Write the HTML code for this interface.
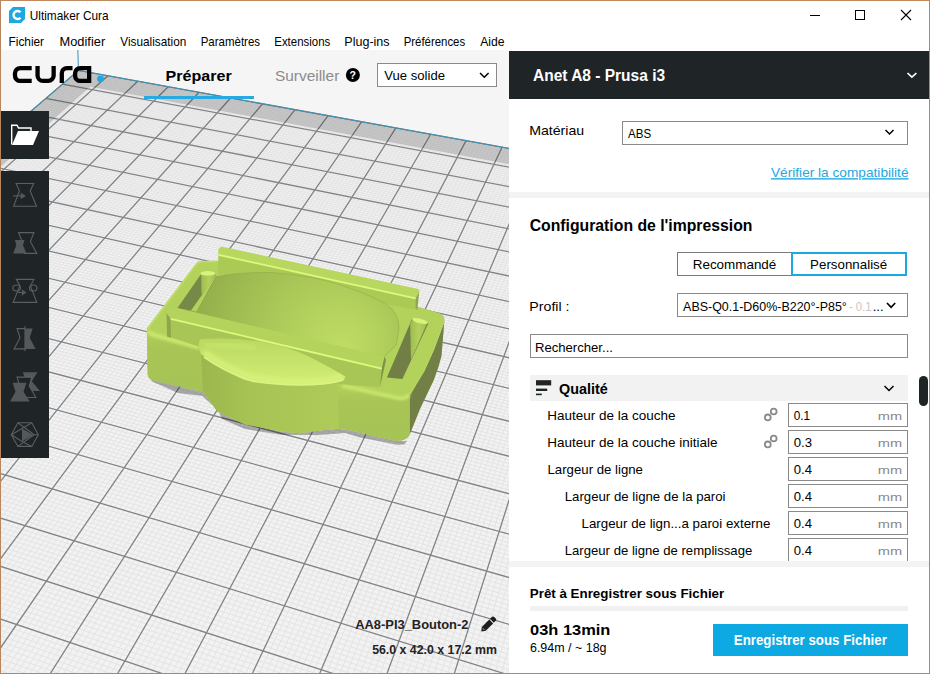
<!DOCTYPE html>
<html><head><meta charset="utf-8">
<style>
*{margin:0;padding:0;box-sizing:border-box}
html,body{width:930px;height:674px;overflow:hidden;background:#fff;font-family:"Liberation Sans",sans-serif}
.a{position:absolute}
#vp{position:absolute;left:1px;top:50px;width:508px;height:623px;background:#f5f5f5;overflow:hidden}
#vp svg{position:absolute;left:-1px;top:-50px}
.dk{background:#1f2427}
.box{position:absolute;background:#fff;border:1px solid #8a8a8a}
#txt{position:absolute;left:0;top:0;font-family:"Liberation Sans",sans-serif}
</style></head><body>
<div id="vp">
<svg width="930" height="674" viewBox="0 0 930 674">
<polygon points="78.35,70.43 857.26,211.49 859.36,1145.03 -538.22,600.49" fill="#f2f2f2"/>
<path d="M81.28 70.96L-533.85 602.19M76.79 71.78L857.27 213.47M84.21 71.49L-529.46 603.9M75.22 73.13L857.27 215.45M87.15 72.02L-525.06 605.62M73.64 74.49L857.28 217.45M90.09 72.56L-520.65 607.34M72.05 75.85L857.28 219.45M93.03 73.09L-516.22 609.06M70.46 77.22L857.28 221.46M95.98 73.62L-511.78 610.79M68.86 78.59L857.29 223.49M98.94 74.16L-507.33 612.52M67.26 79.97L857.29 225.52M101.89 74.69L-502.87 614.26M65.65 81.35L857.3 227.57M104.86 75.23L-498.39 616.01M64.03 82.75L857.3 229.62M110.8 76.31L-489.4 619.51M60.77 85.54L857.31 233.76M113.78 76.85L-484.89 621.27M59.14 86.95L857.32 235.85M116.76 77.39L-480.36 623.03M57.49 88.37L857.32 237.94M119.75 77.93L-475.82 624.8M55.84 89.78L857.33 240.05M122.74 78.47L-471.27 626.58M54.18 91.21L857.33 242.17M125.74 79.01L-466.7 628.36M52.52 92.64L857.34 244.29M128.74 79.56L-462.12 630.14M50.85 94.08L857.34 246.43M131.75 80.1L-457.52 631.93M49.17 95.52L857.35 248.58M134.76 80.65L-452.92 633.73M47.48 96.97L857.35 250.74M140.79 81.74L-443.66 637.33M44.09 99.89L857.36 255.1M143.82 82.29L-439.01 639.14M42.38 101.36L857.37 257.29M146.85 82.84L-434.35 640.96M40.67 102.83L857.37 259.49M149.89 83.39L-429.68 642.78M38.95 104.31L857.37 261.71M152.93 83.94L-424.99 644.61M37.22 105.8L857.38 263.94M155.97 84.49L-420.28 646.44M35.48 107.29L857.38 266.18M159.02 85.04L-415.57 648.28M33.74 108.79L857.39 268.43M162.08 85.59L-410.84 650.12M31.99 110.29L857.4 270.69M165.14 86.15L-406.09 651.97M30.23 111.8L857.4 272.97M171.28 87.26L-396.56 655.68M26.69 114.85L857.41 277.55M174.35 87.82L-391.77 657.55M24.91 116.38L857.42 279.87M177.43 88.37L-386.97 659.42M23.12 117.92L857.42 282.19M180.52 88.93L-382.16 661.3M21.32 119.46L857.43 284.52M183.61 89.49L-377.33 663.18M19.52 121.01L857.43 286.87M186.7 90.05L-372.48 665.07M17.71 122.57L857.44 289.23M189.8 90.62L-367.62 666.96M15.89 124.13L857.44 291.61M192.91 91.18L-362.75 668.86M14.06 125.71L857.45 293.99M196.02 91.74L-357.86 670.76M12.22 127.28L857.45 296.39M202.26 92.87L-348.04 674.59M8.53 130.46L857.46 301.23M205.38 93.44L-343.11 676.51M6.66 132.06L857.47 303.67M208.51 94L-338.16 678.44M4.8 133.67L857.47 306.12M211.65 94.57L-333.2 680.37M2.92 135.28L857.48 308.58M214.79 95.14L-328.22 682.31M1.03 136.9L857.49 311.06M217.94 95.71L-323.23 684.26M-0.86 138.53L857.49 313.55M221.09 96.28L-318.22 686.21M-2.76 140.16L857.5 316.06M224.25 96.85L-313.19 688.17M-4.67 141.81L857.5 318.58M227.41 97.43L-308.16 690.13M-6.59 143.46L857.51 321.11M233.75 98.57L-298.03 694.07M-10.45 146.78L857.52 326.22M236.93 99.15L-292.95 696.05M-12.4 148.45L857.53 328.79M240.11 99.73L-287.85 698.04M-14.35 150.13L857.53 331.38M243.3 100.3L-282.73 700.03M-16.31 151.81L857.54 333.99M246.49 100.88L-277.6 702.03M-18.28 153.51L857.54 336.61M249.69 101.46L-272.45 704.04M-20.26 155.21L857.55 339.24M252.89 102.04L-267.29 706.05M-22.25 156.92L857.55 341.89M256.1 102.62L-262.11 708.07M-24.25 158.64L857.56 344.56M259.32 103.2L-256.91 710.09M-26.26 160.36L857.57 347.23M265.76 104.37L-246.47 714.16M-30.3 163.84L857.58 352.64M268.99 104.96L-241.23 716.21M-32.33 165.59L857.59 355.36M272.23 105.54L-235.97 718.26M-34.38 167.35L857.59 358.11M275.47 106.13L-230.69 720.31M-36.43 169.11L857.6 360.86M278.72 106.72L-225.4 722.37M-38.5 170.88L857.6 363.63M281.97 107.31L-220.09 724.44M-40.57 172.67L857.61 366.42M285.23 107.9L-214.76 726.52M-42.65 174.46L857.62 369.23M288.49 108.49L-209.41 728.6M-44.74 176.26L857.62 372.05M291.76 109.08L-204.05 730.69M-46.85 178.06L857.63 374.89M298.32 110.27L-193.28 734.89M-51.08 181.7L857.64 380.61M301.6 110.86L-187.87 736.99M-53.21 183.53L857.65 383.5M304.89 111.46L-182.44 739.11M-55.35 185.38L857.65 386.41M308.19 112.05L-177 741.23M-57.5 187.23L857.66 389.33M311.49 112.65L-171.53 743.36M-59.67 189.08L857.67 392.27M314.8 113.25L-166.05 745.5M-61.84 190.95L857.67 395.23M318.11 113.85L-160.56 747.64M-64.02 192.83L857.68 398.2M321.43 114.45L-155.04 749.79M-66.21 194.71L857.69 401.2M324.75 115.05L-149.51 751.94M-68.42 196.61L857.69 404.21M331.42 116.26L-138.39 756.28M-72.86 200.42L857.71 410.29M334.76 116.87L-132.8 758.45M-75.09 202.34L857.72 413.35M338.11 117.47L-127.2 760.64M-77.34 204.28L857.72 416.44M341.46 118.08L-121.57 762.83M-79.59 206.22L857.73 419.54M344.82 118.69L-115.93 765.02M-81.86 208.17L857.74 422.67M348.18 119.3L-110.27 767.23M-84.14 210.13L857.74 425.81M351.55 119.91L-104.6 769.44M-86.43 212.09L857.75 428.97M354.93 120.52L-98.9 771.66M-88.73 214.07L857.76 432.15M358.31 121.13L-93.19 773.89M-91.05 216.06L857.76 435.35M365.09 122.36L-81.7 778.36M-95.71 220.07L857.78 441.82M368.48 122.97L-75.93 780.61M-98.05 222.08L857.79 445.08M371.89 123.59L-70.14 782.87M-100.41 224.11L857.79 448.36M375.3 124.21L-64.33 785.13M-102.78 226.15L857.8 451.66M378.71 124.83L-58.51 787.4M-105.16 228.2L857.81 454.99M382.14 125.45L-52.66 789.68M-107.56 230.25L857.82 458.33M385.56 126.07L-46.8 791.96M-109.96 232.32L857.82 461.7M389 126.69L-40.91 794.26M-112.38 234.4L857.83 465.09M392.44 127.31L-35.01 796.56M-114.81 236.49L857.84 468.49M399.33 128.56L-23.14 801.18M-119.71 240.7L857.85 475.38M402.79 129.19L-17.18 803.5M-122.17 242.82L857.86 478.86M406.25 129.81L-11.19 805.83M-124.65 244.95L857.87 482.35M409.72 130.44L-5.19 808.17M-127.15 247.1L857.88 485.88M413.2 131.07L0.83 810.52M-129.65 249.25L857.89 489.42M416.68 131.7L6.88 812.87M-132.17 251.41L857.89 492.99M420.17 132.33L12.94 815.24M-134.7 253.59L857.9 496.58M423.66 132.97L19.02 817.61M-137.24 255.78L857.91 500.2M427.16 133.6L25.13 819.99M-139.8 257.97L857.92 503.83M434.17 134.87L37.4 824.77M-144.95 262.4L857.93 511.19M437.69 135.51L43.57 827.17M-147.55 264.64L857.94 514.9M441.22 136.15L49.75 829.58M-150.16 266.88L857.95 518.63M444.75 136.79L55.96 832M-152.78 269.13L857.96 522.4M448.28 137.43L62.19 834.43M-155.42 271.4L857.97 526.19M451.82 138.07L68.44 836.86M-158.07 273.68L857.98 530M455.37 138.71L74.71 839.3M-160.74 275.97L857.99 533.84M458.93 139.35L81 841.76M-163.42 278.28L857.99 537.7M462.49 140L87.32 844.22M-166.11 280.59L858 541.6M469.63 141.29L100.01 849.16M-171.54 285.26L858.02 549.46M473.21 141.94L106.39 851.65M-174.28 287.61L858.03 553.44M476.79 142.59L112.79 854.14M-177.03 289.98L858.04 557.44M480.38 143.24L119.22 856.65M-179.79 292.35L858.05 561.47M483.98 143.89L125.66 859.16M-182.57 294.75L858.06 565.52M487.59 144.54L132.13 861.68M-185.37 297.15L858.07 569.61M491.2 145.2L138.62 864.21M-188.18 299.57L858.07 573.72M494.81 145.85L145.13 866.74M-191.01 302L858.08 577.87M498.44 146.51L151.67 869.29M-193.85 304.44L858.09 582.04M505.7 147.82L164.81 874.41M-199.58 309.36L858.11 590.48M509.35 148.48L171.41 876.98M-202.47 311.85L858.12 594.74M513 149.15L178.04 879.57M-205.37 314.34L858.13 599.03M516.65 149.81L184.69 882.16M-208.29 316.85L858.14 603.36M520.31 150.47L191.36 884.76M-211.23 319.38L858.15 607.72M523.98 151.14L198.06 887.37M-214.18 321.92L858.16 612.1M527.66 151.8L204.78 889.98M-217.15 324.47L858.17 616.52M531.34 152.47L211.53 892.61M-220.13 327.03L858.18 620.98M535.03 153.14L218.3 895.25M-223.14 329.62L858.19 625.46M542.42 154.48L231.91 900.55M-229.19 334.82L858.21 634.53M546.13 155.15L238.75 903.22M-232.24 337.45L858.22 639.12M549.85 155.82L245.61 905.89M-235.31 340.08L858.23 643.74M553.57 156.49L252.5 908.58M-238.4 342.74L858.24 648.39M557.3 157.17L259.42 911.27M-241.51 345.41L858.25 653.08M561.03 157.84L266.36 913.98M-244.63 348.09L858.26 657.81M564.77 158.52L273.32 916.69M-247.77 350.79L858.27 662.57M568.52 159.2L280.31 919.41M-250.93 353.51L858.28 667.37M572.28 159.88L287.32 922.14M-254.11 356.24L858.3 672.2M579.81 161.24L301.43 927.64M-260.51 361.75L858.32 681.98M583.58 161.93L308.52 930.4M-263.75 364.53L858.33 686.93M587.36 162.61L315.63 933.18M-267 367.32L858.34 691.91M591.15 163.3L322.78 935.96M-270.27 370.13L858.35 696.94M594.95 163.99L329.94 938.75M-273.56 372.96L858.36 702M598.75 164.68L337.14 941.55M-276.86 375.8L858.37 707.1M602.56 165.37L344.36 944.37M-280.19 378.67L858.39 712.25M606.37 166.06L351.61 947.19M-283.54 381.54L858.4 717.43M610.2 166.75L358.88 950.03M-286.91 384.44L858.41 722.66M617.86 168.14L373.51 955.72M-293.7 390.28L858.43 733.23M621.71 168.83L380.86 958.59M-297.13 393.22L858.44 738.58M625.56 169.53L388.24 961.47M-300.58 396.19L858.46 743.98M629.42 170.23L395.65 964.35M-304.04 399.17L858.47 749.42M633.28 170.93L403.09 967.25M-307.53 402.17L858.48 754.9M637.15 171.63L410.55 970.16M-311.04 405.19L858.49 760.43M641.03 172.33L418.04 973.08M-314.58 408.22L858.51 766M644.92 173.04L425.56 976.01M-318.13 411.28L858.52 771.62M648.81 173.74L433.11 978.95M-321.7 414.35L858.53 777.29M656.62 175.16L448.29 984.86M-328.92 420.56L858.56 788.76M660.53 175.86L455.92 987.84M-332.56 423.69L858.57 794.57M664.46 176.58L463.58 990.82M-336.22 426.84L858.58 800.42M668.39 177.29L471.27 993.82M-339.91 430L858.6 806.33M672.32 178L478.99 996.83M-343.62 433.19L858.61 812.29M676.27 178.71L486.74 999.85M-347.35 436.4L858.62 818.3M680.22 179.43L494.52 1002.88M-351.11 439.63L858.64 824.36M684.17 180.15L502.33 1005.92M-354.89 442.88L858.65 830.47M688.14 180.86L510.17 1008.97M-358.69 446.15L858.66 836.63M696.09 182.3L525.93 1015.11M-366.37 452.75L858.69 849.12M700.08 183.03L533.86 1018.2M-370.24 456.08L858.71 855.45M704.07 183.75L541.82 1021.3M-374.14 459.43L858.72 861.83M708.08 184.47L549.8 1024.42M-378.07 462.81L858.74 868.27M712.09 185.2L557.82 1027.54M-382.02 466.2L858.75 874.76M716.1 185.93L565.87 1030.68M-385.99 469.62L858.76 881.32M720.13 186.66L573.96 1033.83M-389.99 473.06L858.78 887.93M724.16 187.39L582.07 1036.99M-394.02 476.52L858.79 894.6M728.2 188.12L590.21 1040.16M-398.07 480.01L858.81 901.33M736.3 189.59L606.6 1046.54M-406.26 487.04L858.84 914.98M740.36 190.32L614.83 1049.75M-410.39 490.6L858.86 921.89M744.43 191.06L623.11 1052.98M-414.55 494.17L858.87 928.88M748.51 191.8L631.41 1056.21M-418.74 497.77L858.89 935.92M752.59 192.54L639.75 1059.46M-422.96 501.4L858.9 943.03M756.69 193.28L648.12 1062.72M-427.2 505.04L858.92 950.21M760.79 194.02L656.52 1066M-431.47 508.72L858.94 957.45M764.89 194.76L664.96 1069.28M-435.77 512.41L858.95 964.76M769.01 195.51L673.43 1072.58M-440.1 516.14L858.97 972.14M777.27 197L690.46 1079.22M-448.85 523.65L859 987.12M781.4 197.75L699.04 1082.56M-453.26 527.45L859.02 994.71M785.55 198.51L707.64 1085.91M-457.71 531.27L859.04 1002.38M789.71 199.26L716.28 1089.28M-462.19 535.12L859.05 1010.12M793.87 200.01L724.95 1092.66M-466.7 539L859.07 1017.94M798.04 200.77L733.66 1096.05M-471.24 542.9L859.09 1025.83M802.22 201.52L742.4 1099.46M-475.81 546.83L859.11 1033.8M806.4 202.28L751.18 1102.88M-480.41 550.79L859.12 1041.85M810.6 203.04L760 1106.31M-485.04 554.77L859.14 1049.98M819.01 204.56L777.73 1113.22M-494.41 562.82L859.18 1066.48M823.23 205.33L786.66 1116.7M-499.14 566.89L859.2 1074.86M827.45 206.09L795.61 1120.19M-503.9 570.99L859.22 1083.32M831.69 206.86L804.61 1123.69M-508.7 575.11L859.24 1091.86M835.93 207.63L813.64 1127.21M-513.53 579.27L859.26 1100.5M840.18 208.4L822.71 1130.75M-518.4 583.45L859.28 1109.22M844.44 209.17L831.81 1134.29M-523.3 587.66L859.3 1118.03M848.7 209.94L840.96 1137.86M-528.24 591.91L859.32 1126.94M852.98 210.72L850.14 1141.43M-533.21 596.18L859.34 1135.93" stroke="#e4e4e5" stroke-width="1" fill="none"/>
<path d="M78.35 70.43L-538.22 600.49M78.35 70.43L857.26 211.49M107.83 75.77L-493.91 617.75M62.41 84.14L857.31 231.69M137.77 81.19L-448.3 635.53M45.79 98.43L857.36 252.91M168.21 86.7L-401.33 653.82M28.46 113.32L857.41 275.26M199.14 92.31L-352.96 672.67M10.38 128.87L857.46 298.8M230.58 98L-303.1 692.1M-8.52 145.11L857.51 323.66M262.54 103.79L-251.7 712.13M-28.27 162.1L857.57 349.93M295.04 109.67L-198.68 732.78M-48.96 179.88L857.64 377.74M328.08 115.66L-143.96 754.11M-70.63 198.51L857.7 407.24M361.69 121.74L-87.45 776.12M-93.37 218.06L857.77 438.57M395.88 127.94L-29.08 798.86M-117.25 238.59L857.85 471.93M430.66 134.24L31.25 822.37M-142.37 260.18L857.93 507.5M466.05 140.64L93.65 846.69M-168.82 282.92L858.01 545.52M502.07 147.17L158.23 871.85M-196.71 306.89L858.1 586.24M538.72 153.8L225.09 897.9M-226.15 332.21L858.2 629.98M576.04 160.56L294.36 924.89M-257.3 358.99L858.31 677.07M614.03 167.44L366.18 952.87M-290.29 387.35L858.42 727.92M652.71 174.45L440.69 981.9M-325.3 417.44L858.54 783M692.11 181.58L518.03 1012.04M-362.52 449.44L858.68 842.85M732.25 188.85L598.39 1043.35M-402.15 483.51L858.82 908.12M773.13 196.26L681.93 1075.9M-444.46 519.88L858.99 979.59M814.8 203.8L768.85 1109.76M-489.71 558.78L859.16 1058.19M857.26 211.49L859.36 1145.03M-538.22 600.49L859.36 1145.03" stroke="#818386" stroke-width="1.3" fill="none"/>
<path d="M78.35,70.43 857.26,211.49 859.36,1145.03 -538.22,600.49Z M90.21,86.74 -459.82,578.63 785.26,1043.08 820.4,221.77Z" fill="rgba(0,0,0,0.16)" fill-rule="evenodd"/>
<path d="M-8.52 145.11L78.35 70.43L857.26 211.49M78.35 70.43L76.75 0" stroke="#3b93b8" stroke-width="1" fill="none"/>
<defs>
<linearGradient id="cyl" x1="0" y1="0" x2="1" y2="0">
<stop offset="0" stop-color="#9cb74e"/><stop offset="0.35" stop-color="#a6c354"/><stop offset="1" stop-color="#afcc59"/>
</linearGradient>
<radialGradient id="dome" gradientUnits="userSpaceOnUse" cx="320" cy="330" r="150" fx="345" fy="350">
<stop offset="0" stop-color="#c0de65"/><stop offset="0.35" stop-color="#afcd5a"/><stop offset="0.7" stop-color="#9cb950"/><stop offset="1" stop-color="#8aa447"/>
</radialGradient>
<linearGradient id="lip" x1="0" y1="0" x2="0" y2="1">
<stop offset="0" stop-color="#bad95f"/><stop offset="0.5" stop-color="#c6e46b"/><stop offset="1" stop-color="#d3ee74"/>
</linearGradient>
<linearGradient id="ffr" x1="0" y1="0" x2="0" y2="1">
<stop offset="0" stop-color="#b4d25c"/><stop offset="0.3" stop-color="#a8c556"/><stop offset="1" stop-color="#a6c355"/>
</linearGradient>
<linearGradient id="post" x1="0" y1="0" x2="1" y2="0">
<stop offset="0" stop-color="#9fbb52"/><stop offset="0.5" stop-color="#b3d15c"/><stop offset="1" stop-color="#a2bf53"/>
</linearGradient>
<filter id="blur1" x="-20%" y="-50%" width="140%" height="200%"><feGaussianBlur stdDeviation="1"/></filter>
<filter id="blur2" x="-20%" y="-50%" width="140%" height="200%"><feGaussianBlur stdDeviation="2"/></filter>
<clipPath id="lipclip"><path d="M200 339.2Q230 337 263.1 341.9Q290 347 308.8 356.6Q333 369 345.4 376.7Q344 381 341.7 381.5Q330 384 318 384.5Q281.4 387 244.8 380Q217.4 368 201 354Q197 346 200 339.2Z"/></clipPath>
</defs>
<!-- shadow -->
<path d="M150 379L200.2 391.2L202.8 391.3L217.4 411.4L244.8 424.2L281.4 431.5L300 433.2L319.4 430.6L338.7 428.7L351.6 430.6L377.4 437.1L396.8 441L407 441L404 444.5L397 444.8L377 440.8L360 437.5L345 433L318 435L281 434.8L245 429L222 419L218.3 410.5L202.3 396L178.3 393L153 382Z" fill="rgba(0,0,0,0.3)"/>
<!-- frame silhouette base -->
<path d="M200.6 261.3L216.6 260.9L418.3 307.1L438.5 313.1Q444.4 315 444.4 319L443.8 327.3L441.5 355.8L438.5 366.5L433.8 380L420 408.7L409.7 434.5Q407 441 396.8 441L377.4 437.1L351.6 430.6L338.7 428.7L319.4 430.6L300 433.2L281.4 431.5L244.8 424.2L217.4 411.4L202.8 391.3L200.2 391.2L152 380Q147.7 378 147.7 374L146.9 328.4L195.3 265.3Q197.5 261.5 200.6 261.3Z" fill="#a9c755"/>
<!-- frame top -->
<path d="M200.6 261.3L216.6 260.9L418.3 307.1L438.5 313.1Q444.4 315 444.4 321L433.8 349.9L424.3 371.3L410.7 394.5Q406 398.5 400.6 397.7L341.3 384.2L198.5 346.5L155 334Q147 331 146.9 328.4L195.3 265.3Q197.5 261.5 200.6 261.3Z" fill="#b3d25c"/>
<!-- right face -->
<path d="M444.4 321L443.8 327.3L441.5 355.8L438.5 366.5L433.8 380L420 408.7L409.7 434.5L409.7 396L410.7 394.5L424.3 371.3L433.8 349.9Z" fill="#728047"/>
<!-- front faces -->
<path d="M341.3 384.2L400.6 397.7Q406 398.5 409.7 394.5L409.7 434.5Q407 441 396.8 441L377.4 437.1L351.6 430.6L338.7 428.7L337.4 384Z" fill="url(#ffr)"/>
<path d="M146.9 328.4Q147 331 155 334L198.5 346.5L202.8 391.3L200.2 391.2L152 380Q147.7 378 147.7 374Z" fill="url(#ffr)"/>
<!-- rounded edge highlights -->
<path d="M148 331Q150 334 156 335.5L199 347.5" stroke="#c9e56b" stroke-width="4.5" fill="none" filter="url(#blur1)"/>
<path d="M342 385.5L400 398.5Q405.5 399 409 394.5" stroke="#c8e56b" stroke-width="4" fill="none" filter="url(#blur1)"/>
<path d="M409 394.5L424 371L433.5 350L444 322" stroke="#b9d862" stroke-width="1" fill="none"/>
<path d="M147.5 329L195.5 265.5Q197.5 262 201 261.8L216.6 261.3" stroke="#bfdd64" stroke-width="1.8" fill="none"/>
<!-- left slot -->
<path d="M200.6 274.7L216.2 274.7L190.8 310.8L177.5 308.1Z" fill="#778946"/>
<path d="M201.2 274.7L216.2 274.7L203 294L201.5 294Z" fill="url(#post)"/>
<ellipse cx="207.8" cy="273.3" rx="7.4" ry="2.3" fill="#d8f27a"/>
<path d="M216.6 276L197 311.6" stroke="#7f9248" stroke-width="0.9"/>
<!-- right slot -->
<path d="M412 318.9L428.4 323.3L402.4 378.9L386.9 377.4Z" fill="#717f46"/>
<path d="M412.2 320L427 323.5L411 360L410.2 324Z" fill="url(#post)"/>
<ellipse cx="420" cy="321" rx="8" ry="2.4" transform="rotate(14 420 321)" fill="#d8f27a"/>
<!-- back rail -->
<path d="M218.3 254.6L415.6 298.2L417.3 310L218 274Z" fill="#abca55"/>
<path d="M220.9 246.5L417.3 288.7Q419.8 289.5 419.3 291.5L415.6 298.2L218.3 254.6L218.5 249Z" fill="#b8d75f"/>
<path d="M419.3 291.5L417.3 310.2L415.6 308L415.6 298.2Z" fill="#8ea74b"/>
<path d="M218.5 254.8L415.6 298.4" stroke="#def87e" stroke-width="1.8"/>
<!-- dome -->
<path d="M216.6 276.5Q240 272 271 272.5Q312 275 342 285.5Q380 298 392 309Q400 318 398.8 330L396.4 344.6L384.5 356.7L176.9 308.2L197 311.6Z" fill="url(#dome)"/>
<path d="M216.6 276.5Q240 272 271 272.5Q312 275 342 285.5Q380 298 392 309Q400 318 398.8 330L396.4 344.6L384.5 356.7" stroke="#8fa84a" stroke-width="1" fill="none" opacity="0.55"/>
<!-- front rail -->
<path d="M168 310.5L176.9 308.2L384.5 356.7L381.8 368.3L170.7 318.5Z" fill="#b4d35c"/>
<path d="M170.7 318.5L381.8 368.3L380 387L341.3 384.2L198.5 346.5L171 337.2Z" fill="#a8c655"/>
<path d="M384.5 356.7L386 360L380 387L381.8 368.3Z" fill="#7f9148"/>
<path d="M166.5 313L170.7 318.5L171 338L167 336.5Z" fill="#8fa64d"/>
<path d="M165 311L176.9 308.2L170.7 318.5" fill="#b4d35c"/>
<path d="M170.7 318.8L381.8 368.6" stroke="#def87e" stroke-width="1.8"/>
<!-- bulge cylinder -->
<path d="M201 352.9Q217.4 365.7 244.8 378.5Q281.4 386 318 383Q335 382 341.7 380.3L337.4 384L338.7 428.7L319.4 430.6L300 433.2L281.4 431.5L244.8 424.2L217.4 411.4L202.8 391.3Z" fill="url(#cyl)"/>
<!-- bulge lip -->
<path d="M200 339.2Q230 337 263.1 341.9Q290 347 308.8 356.6Q333 369 345.4 376.7Q344 381 341.7 381.5Q330 384 318 384.5Q281.4 387 244.8 380Q217.4 368 201 354Q197 346 200 339.2Z" fill="url(#lip)"/>
<g clip-path="url(#lipclip)">
<path d="M204 352Q225 368 252 377Q290 384 325 380Q338 378 343 375" stroke="#d8f27c" stroke-width="5" fill="none" filter="url(#blur2)"/>
<path d="M205 345Q230 344 255 348" stroke="#c8e670" stroke-width="6" fill="none" filter="url(#blur2)" opacity="0.7"/>
</g>
<path d="M204 357Q225 372 252 381Q290 387 325 383.5Q338 382 343 379" stroke="#dbf382" stroke-width="1.8" fill="none"/>

</svg>
<div class="a" style="left:143px;top:46px;width:110px;height:3px;background:#29a9e1"></div>
<div class="a dk" style="left:0;top:61px;width:48px;height:48px"></div>
<div class="a dk" style="left:0;top:121px;width:48px;height:287px"></div>
</div>
<!-- right panel -->
<div class="a dk" style="left:509px;top:51px;width:420px;height:48px"></div>
<div class="a" style="left:509px;top:192px;width:420px;height:6px;background:#f3f3f3"></div>
<div class="a" style="left:509px;top:561px;width:420px;height:6px;background:#f3f3f3"></div>
<div class="box" style="left:377px;top:63px;width:120px;height:24px"></div>
<div class="box" style="left:622px;top:121px;width:286px;height:24px"></div>
<div class="box" style="left:677px;top:252px;width:115px;height:24px;border-color:#7a7a7a"></div>
<div class="box" style="left:791px;top:252px;width:116px;height:24px;border:2px solid #1ea8e0"></div>
<div class="box" style="left:677px;top:293px;width:231px;height:24px"></div>
<div class="box" style="left:530px;top:334px;width:378px;height:24px"></div>
<div class="a" style="left:530px;top:375px;width:378px;height:26px;background:#f2f2f2"></div>
<div class="a" style="left:919px;top:376px;width:9px;height:30px;border-radius:4.5px;background:#1f2427"></div>
<div class="box" style="left:788px;top:403px;width:120px;height:24px"></div>
<div class="box" style="left:788px;top:430px;width:120px;height:24px"></div>
<div class="box" style="left:788px;top:457px;width:120px;height:24px"></div>
<div class="box" style="left:788px;top:484px;width:120px;height:24px"></div>
<div class="box" style="left:788px;top:511px;width:120px;height:24px"></div>
<div class="a" style="left:788px;top:538px;width:120px;height:23px;border:1px solid #8a8a8a;border-bottom:none;background:#fff"></div>
<div class="a" style="left:530px;top:606px;width:378px;height:5px;background:#f1f1f1"></div>
<div class="a" style="left:713px;top:624px;width:195px;height:32px;background:#0ca9e3"></div>
<!-- window border -->
<div class="a" style="left:0;top:0;width:930px;height:1px;background:#c08a60"></div>
<div class="a" style="left:0;top:673px;width:930px;height:1px;background:#b8865e"></div>
<div class="a" style="left:0;top:0;width:1px;height:674px;background:#b8865e"></div>
<div class="a" style="left:929px;top:0;width:1px;height:674px;background:#b8865e"></div>
<svg id="txt" width="930" height="674" viewBox="0 0 930 674">
<!-- app icon -->
<path d="M13 7H25V19L21 23H9V11Z" fill="#1ea8e0"/>
<path d="M20.5 12.3A4 4 0 1 0 20.5 17.7" stroke="#fff" stroke-width="2.4" fill="none"/>
<!-- window controls -->
<path d="M810 15.5H820" stroke="#000" stroke-width="1"/>
<rect x="855.5" y="10.5" width="9" height="9" stroke="#000" stroke-width="1" fill="none"/>
<path d="M901 10L911 20M911 10L901 20" stroke="#000" stroke-width="1.1"/>
<!-- cura logo -->
<g stroke="#000" stroke-width="4.3" fill="none">
<path d="M31.7 68.05H20.3A5.3 5.3 0 0 0 15 73.35V75.65A5.3 5.3 0 0 0 20.3 80.95H31.7"/>
<path d="M37.55 65.9V75.45A5.5 5.5 0 0 0 43.05 80.95H48.15A5.5 5.5 0 0 0 53.65 75.45V65.9"/>
<path d="M61.8 83.1V73.35A5.3 5.3 0 0 1 67.1 68.05H72.5"/>
<path d="M89.15 83.1V68.05H80.4A5.3 5.3 0 0 0 75.1 73.35V75.65A5.3 5.3 0 0 0 80.4 80.95H89.15"/>
</g>
<circle cx="100.5" cy="78.8" r="3.4" fill="#1ea8e0"/>
<!-- help icon -->
<circle cx="352.9" cy="75" r="7" fill="#000"/>
<text x="349.6" y="79.3" font-size="10.5" font-weight="bold" fill="#fff">?</text>
<!-- chevrons -->
<path d="M480 73L484.3 77.3L488.6 73" stroke="#000" stroke-width="1.5" fill="none"/>
<path d="M885.5 130L889.5 134L893.5 130" stroke="#000" stroke-width="1.5" fill="none"/>
<path d="M887 303L891.1 307.3L895.2 303" stroke="#000" stroke-width="1.7" fill="none"/>
<path d="M884.5 386L889 390.5L893.5 386" stroke="#000" stroke-width="1.5" fill="none"/>
<path d="M907.5 73L911.9 77.2L916.4 73" stroke="#fff" stroke-width="1.7" fill="none"/>
<!-- quality icon -->
<rect x="536" y="380.2" width="15.2" height="5.2" fill="#1f2427"/>
<rect x="536" y="388.6" width="11.2" height="2.4" fill="#1f2427"/>
<rect x="536" y="393.6" width="5.8" height="1.6" fill="#1f2427"/>
<!-- link icons -->
<g stroke="#8a8a8a" stroke-width="1.8" fill="none">
<circle cx="767.8" cy="417.4" r="2.9"/><circle cx="773.7" cy="411.5" r="2.9"/>
<circle cx="767.8" cy="444.4" r="2.9"/><circle cx="773.7" cy="438.5" r="2.9"/>
</g>
<!-- toolbar icons -->
<g stroke="#5b5f62" stroke-width="1.1" fill="none" stroke-linejoin="miter">
<path d="M16.1 183.5H33.7L30.2 190.9L36.5 206.2H13.6L19.4 190.9Z"/>
<path d="M13 195.9H21.5"/>
<path d="M21.5 240L18.6 232.6H33.9L30.4 241.5L36.8 253.4H24"/>
<path d="M16.3 279.4H33.9L30.4 285.8L36.8 302.4H13.1L20 285.8Z"/>
<ellipse cx="16.6" cy="288" rx="3.8" ry="3"/><ellipse cx="33.2" cy="288" rx="3.8" ry="3"/>
<path d="M17.8 292.5H22"/>
<path d="M25 325.9V351.1"/>
<path d="M25 328.6H17.1L20 337.8L14.1 348.9H25"/>
<path d="M17.9 422.8H31.8L38.3 434.7L31.8 446.4H17.9L11.4 434.7Z"/>
<path d="M17.9 422.8L34.2 434.7L17.9 446.4M31.8 422.8L22 428.5L11.4 434.7L22 441.5L31.8 446.4M38.3 434.7H34.2"/>
</g>
<g fill="#54585b">
<path d="M20.6 192.5L25.9 195.9L20.6 199.3Z"/>
<path d="M14.9 240H24.5L23 245.2L26.4 253.4H13.1L16.3 245.2Z"/>
<path d="M21.8 289.2L26.5 292.5L21.8 295.8Z"/>
<path d="M25 328.6H32.7L29.7 337.8L35.6 348.9H25Z"/>
<path d="M22.8 372.2H37.5L31.8 381.2L39.9 391H27.7L26 381.2Z"/>
<path d="M17.1 377.1H31.8L29.3 386L35.9 397.5H15.5L19.6 386Z" fill="#1f2427" stroke="#5b5f62" stroke-width="1.1"/>
<path d="M12.7 382.8H26.4L23.6 391.8L29.7 401.6H10.1L15.5 391.8Z"/>
<path d="M22 428.5L33.4 435L22 441.5Z"/>
</g>
<!-- pencil -->
<path d="M481.3 631.4L481.83 626.99L489.26 619.56L493.14 623.44L485.71 630.87Z" fill="#1e1e1e"/>
<path d="M489.96 618.86L492.09 616.73Q493 616 494 616.8L495.97 618.8Q496.6 619.7 495.9 620.6L493.84 622.74Z" fill="#1e1e1e"/>
<path d="M482.8 628.3L484.3 629.8" stroke="#fff" stroke-width="1" opacity="0.8"/>
<!-- folder icon -->
<path d="M11.7 144.5V125.2H17L18.5 128H31V131" stroke="#fff" stroke-width="1.4" fill="none"/>
<path d="M18 131H39L33 145H12Z" fill="#fff"/>
<text x="29.77" y="20.1" font-size="12.46" font-weight="normal" fill="#000" textLength="78.88" lengthAdjust="spacingAndGlyphs">Ultimaker Cura</text>
<text x="8.55" y="45.6" font-size="12.46" font-weight="normal" fill="#000" textLength="35.5" lengthAdjust="spacingAndGlyphs">Fichier</text>
<text x="59.57" y="45.6" font-size="12.46" font-weight="normal" fill="#000" textLength="45.59" lengthAdjust="spacingAndGlyphs">Modifier</text>
<text x="120.3" y="45.6" font-size="12.46" font-weight="normal" fill="#000" textLength="65.96" lengthAdjust="spacingAndGlyphs">Visualisation</text>
<text x="200.68" y="45.6" font-size="12.46" font-weight="normal" fill="#000" textLength="59.36" lengthAdjust="spacingAndGlyphs">Paramètres</text>
<text x="274.28" y="45.6" font-size="12.46" font-weight="normal" fill="#000" textLength="55.96" lengthAdjust="spacingAndGlyphs">Extensions</text>
<text x="344.3" y="45.6" font-size="12.46" font-weight="normal" fill="#000" textLength="45.28" lengthAdjust="spacingAndGlyphs">Plug-ins</text>
<text x="403.69" y="45.6" font-size="12.46" font-weight="normal" fill="#000" textLength="61.45" lengthAdjust="spacingAndGlyphs">Préférences</text>
<text x="480.2" y="45.6" font-size="12.46" font-weight="normal" fill="#000" textLength="24.34" lengthAdjust="spacingAndGlyphs">Aide</text>
<text x="165.54" y="81" font-size="15.29" font-weight="bold" fill="#000" textLength="66.11" lengthAdjust="spacingAndGlyphs">Préparer</text>
<text x="274.88" y="81" font-size="15.51" font-weight="normal" fill="#8c8c8c" textLength="64.42" lengthAdjust="spacingAndGlyphs">Surveiller</text>
<text x="384.3" y="79.8" font-size="13.04" font-weight="normal" fill="#000" textLength="60.67" lengthAdjust="spacingAndGlyphs">Vue solide</text>
<text x="355.24" y="628.8" font-size="12.57" font-weight="bold" fill="#222" textLength="113.22" lengthAdjust="spacingAndGlyphs">AA8-PI3_Bouton-2</text>
<text x="372.13" y="654" font-size="12.57" font-weight="bold" fill="#222" textLength="124.9" lengthAdjust="spacingAndGlyphs">56.0 x 42.0 x 17.2 mm</text>
<text x="532.99" y="80.8" font-size="15.57" font-weight="bold" fill="#fff" textLength="132.07" lengthAdjust="spacingAndGlyphs">Anet A8 - Prusa i3</text>
<text x="529.17" y="135.2" font-size="13.04" font-weight="normal" fill="#000" textLength="55.07" lengthAdjust="spacingAndGlyphs">Matériau</text>
<text x="628" y="138.4" font-size="13.04" font-weight="normal" fill="#000" textLength="23.13" lengthAdjust="spacingAndGlyphs">ABS</text>
<text x="771" y="177.2" font-size="13.62" font-weight="normal" fill="#1ea8e0" textLength="137.49" lengthAdjust="spacingAndGlyphs" text-decoration="underline">Vérifier la compatibilité</text>
<text x="529.67" y="231.1" font-size="16" font-weight="bold" fill="#000" textLength="222.79" lengthAdjust="spacingAndGlyphs">Configuration de l'impression</text>
<text x="692.73" y="268.8" font-size="13.04" font-weight="normal" fill="#000" textLength="83.56" lengthAdjust="spacingAndGlyphs">Recommandé</text>
<text x="810.13" y="268.8" font-size="13.04" font-weight="normal" fill="#000" textLength="77.05" lengthAdjust="spacingAndGlyphs">Personnalisé</text>
<text x="529.37" y="310.8" font-size="13.04" font-weight="normal" fill="#000" textLength="40.18" lengthAdjust="spacingAndGlyphs">Profil :</text>
<text x="683.1" y="310.6" font-size="13.04" font-weight="normal" fill="#000" textLength="163.75" lengthAdjust="spacingAndGlyphs">ABS-Q0.1-D60%-B220°-P85°</text>
<text x="848.95" y="310.6" font-size="13.04" font-weight="normal" fill="#c8c8c8" textLength="22.47" lengthAdjust="spacingAndGlyphs">- 0.1</text>
<text x="872.72" y="310.6" font-size="13.04" font-weight="normal" fill="#000" textLength="10.93" lengthAdjust="spacingAndGlyphs">...</text>
<text x="534.95" y="352.2" font-size="13.04" font-weight="normal" fill="#000" textLength="78" lengthAdjust="spacingAndGlyphs">Rechercher...</text>
<text x="559.12" y="393.6" font-size="13.71" font-weight="bold" fill="#000" textLength="48.75" lengthAdjust="spacingAndGlyphs">Qualité</text>
<text x="547.32" y="420.3" font-size="13.04" font-weight="normal" fill="#000" textLength="128.17" lengthAdjust="spacingAndGlyphs">Hauteur de la couche</text>
<text x="547.32" y="447.3" font-size="13.04" font-weight="normal" fill="#000" textLength="170.07" lengthAdjust="spacingAndGlyphs">Hauteur de la couche initiale</text>
<text x="547.54" y="474.1" font-size="13.04" font-weight="normal" fill="#000" textLength="95.43" lengthAdjust="spacingAndGlyphs">Largeur de ligne</text>
<text x="564.74" y="501.2" font-size="13.04" font-weight="normal" fill="#000" textLength="160.78" lengthAdjust="spacingAndGlyphs">Largeur de ligne de la paroi</text>
<text x="581.53" y="527.7" font-size="13.04" font-weight="normal" fill="#000" textLength="188.85" lengthAdjust="spacingAndGlyphs">Largeur de lign...a paroi externe</text>
<text x="564.75" y="554.8" font-size="13.04" font-weight="normal" fill="#000" textLength="187.52" lengthAdjust="spacingAndGlyphs">Largeur de ligne de remplissage</text>
<text x="529.8" y="598.1" font-size="13.57" font-weight="bold" fill="#000" textLength="194.42" lengthAdjust="spacingAndGlyphs">Prêt à Enregistrer sous Fichier</text>
<text x="530.11" y="634.7" font-size="14.57" font-weight="bold" fill="#000" textLength="80.29" lengthAdjust="spacingAndGlyphs">03h 13min</text>
<text x="529.98" y="652" font-size="13.04" font-weight="normal" fill="#000" textLength="76.52" lengthAdjust="spacingAndGlyphs">6.94m / ~ 18g</text>
<text x="733.8" y="645.3" font-size="14.29" font-weight="bold" fill="#fff" textLength="153.02" lengthAdjust="spacingAndGlyphs">Enregistrer sous Fichier</text>
<text x="793.75" y="420.3" font-size="13.04" font-weight="normal" fill="#000" textLength="16.4" lengthAdjust="spacingAndGlyphs">0.1</text>
<text x="877.82" y="420.3" font-size="10.14" font-weight="normal" fill="#8a8a8a" textLength="24.4" lengthAdjust="spacingAndGlyphs">mm</text>
<text x="793.7" y="447.3" font-size="13.04" font-weight="normal" fill="#000" textLength="18.37" lengthAdjust="spacingAndGlyphs">0.3</text>
<text x="877.82" y="447.3" font-size="10.14" font-weight="normal" fill="#8a8a8a" textLength="24.4" lengthAdjust="spacingAndGlyphs">mm</text>
<text x="793.71" y="474.3" font-size="13.04" font-weight="normal" fill="#000" textLength="18.24" lengthAdjust="spacingAndGlyphs">0.4</text>
<text x="877.82" y="474.3" font-size="10.14" font-weight="normal" fill="#8a8a8a" textLength="24.4" lengthAdjust="spacingAndGlyphs">mm</text>
<text x="793.71" y="501.3" font-size="13.04" font-weight="normal" fill="#000" textLength="18.24" lengthAdjust="spacingAndGlyphs">0.4</text>
<text x="877.82" y="501.3" font-size="10.14" font-weight="normal" fill="#8a8a8a" textLength="24.4" lengthAdjust="spacingAndGlyphs">mm</text>
<text x="793.71" y="528.3" font-size="13.04" font-weight="normal" fill="#000" textLength="18.24" lengthAdjust="spacingAndGlyphs">0.4</text>
<text x="877.82" y="528.3" font-size="10.14" font-weight="normal" fill="#8a8a8a" textLength="24.4" lengthAdjust="spacingAndGlyphs">mm</text>
<text x="793.71" y="555.3" font-size="13.04" font-weight="normal" fill="#000" textLength="18.24" lengthAdjust="spacingAndGlyphs">0.4</text>
<text x="877.82" y="555.3" font-size="10.14" font-weight="normal" fill="#8a8a8a" textLength="24.4" lengthAdjust="spacingAndGlyphs">mm</text>
</svg>
</body></html>
